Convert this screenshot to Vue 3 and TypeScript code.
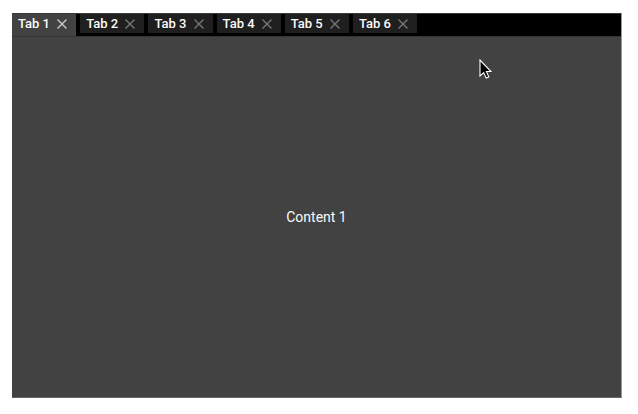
<script setup lang="ts">
import { ref } from 'vue'

const tabs = ref([1, 2, 3, 4, 5, 6])
const active = ref(1)

function close(id: number) {
  tabs.value = tabs.value.filter((t) => t !== id)
  if (active.value === id && tabs.value.length) active.value = tabs.value[0]
}
</script>

<template>
  <main class="page">
    <section class="panel">
      <nav class="tabs">
        <div
          v-for="id in tabs"
          :key="id"
          class="tab"
          :class="{ active: id === active }"
          @click="active = id"
        >
          <span class="label">Tab {{ id }}</span>
          <svg class="close" viewBox="0 0 10 10" @click.stop="close(id)">
            <path d="M0.5 0.5L9.5 9.5M9.5 0.5L0.5 9.5" />
          </svg>
        </div>
      </nav>
      <div class="content">Content {{ active }}</div>
    </section>
    <svg class="cursor" viewBox="0 0 13 20">
      <path d="M1 1V17L4.7 13.6L7.2 19L9.8 17.9L7.4 12.5H12Z" />
    </svg>
  </main>
</template>

<style>
body {
  background: #fff;
}
</style>

<style scoped>
.page {
  position: relative;
  box-sizing: border-box;
  height: 414px;
  padding: 13px 16px 16px 12px;
  font-family: Roboto, sans-serif;
  color: #fafafa;
}
.panel {
  display: flex;
  flex-direction: column;
  box-sizing: border-box;
  height: 100%;
  border-right: 1px solid #999;
  border-bottom: 1px solid #666;
  background: #000;
}
.tabs {
  display: flex;
  align-items: flex-start;
  box-sizing: border-box;
  gap: 4px;
  height: 23px;
  border-top: 1px solid #383838;
}
.tab {
  display: flex;
  align-items: center;
  justify-content: space-between;
  box-sizing: border-box;
  width: 64.2px;
  height: 19px;
  padding: 0 9px 0 6px;
  background: #1f1f1f;
  font-size: 13px;
  font-weight: 500;
  line-height: 19px;
  white-space: nowrap;
}
.tab.active {
  height: 22px;
  padding-bottom: 3px;
  background: #424242;
}
.close {
  width: 10px;
  height: 10px;
  fill: none;
  stroke: #777;
  stroke-width: 1.4;
}
.active .close {
  stroke: #ccc;
}
.content {
  display: flex;
  flex: 1;
  align-items: center;
  justify-content: center;
  box-sizing: border-box;
  border-top: 1px solid #343434;
  background: #424242;
  font-size: 14px;
}
.cursor {
  position: absolute;
  left: 479px;
  top: 59px;
  width: 13px;
  height: 20px;
  fill: #000;
  stroke: #fff;
  stroke-width: 1.1;
}
</style>
